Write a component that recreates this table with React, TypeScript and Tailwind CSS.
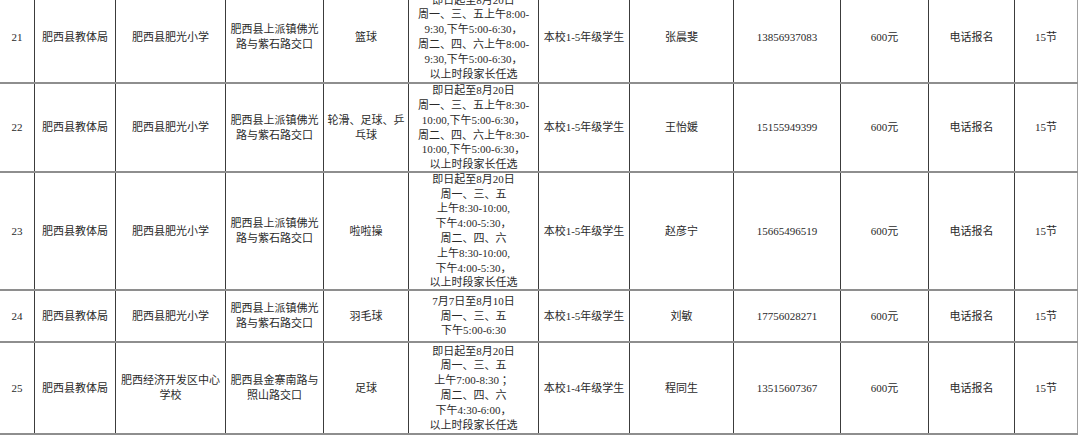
const cols = ['w-[35px]', 'w-[81px]', 'w-[110px]', 'w-[98px]', 'w-[85px]', 'w-[130px]', 'w-[91px]', 'w-[104px]', 'w-[107px]', 'w-[88px]', 'w-[86px]', 'w-[63px]'];

type Row = {
    no: string;
    org: string;
    school: string;
    addr: string;
    sport: string;
    time: string[];
    target: string;
    contact: string;
    phone: string;
    fee: string;
    signup: string;
    lessons: string;
    height: string;
};

const rows: Row[] = [
    {
        no: '21',
        org: '肥西县教体局',
        school: '肥西县肥光小学',
        addr: '肥西县上派镇佛光路与紫石路交口',
        sport: '篮球',
        time: ['即日起至8月20日', '周一、三、五上午8:00-', '9:30,下午5:00-6:30，', '周二、四、六上午8:00-', '9:30,下午5:00-6:30，', '以上时段家长任选'],
        target: '本校1-5年级学生',
        contact: '张晨斐',
        phone: '13856937083',
        fee: '600元',
        signup: '电话报名',
        lessons: '15节',
        height: 'h-[92px]',
    },
    {
        no: '22',
        org: '肥西县教体局',
        school: '肥西县肥光小学',
        addr: '肥西县上派镇佛光路与紫石路交口',
        sport: '轮滑、足球、乒乓球',
        time: ['即日起至8月20日', '周一、三、五上午8:30-', '10:00,下午5:00-6:30，', '周二、四、六上午8:30-', '10:00,下午5:00-6:30，', '以上时段家长任选'],
        target: '本校1-5年级学生',
        contact: '王怡媛',
        phone: '15155949399',
        fee: '600元',
        signup: '电话报名',
        lessons: '15节',
        height: 'h-[89px]',
    },
    {
        no: '23',
        org: '肥西县教体局',
        school: '肥西县肥光小学',
        addr: '肥西县上派镇佛光路与紫石路交口',
        sport: '啦啦操',
        time: ['即日起至8月20日', '周一、三、五', '上午8:30-10:00,', '下午4:00-5:30，', '周二、四、六', '上午8:30-10:00,', '下午4:00-5:30，', '以上时段家长任选'],
        target: '本校1-5年级学生',
        contact: '赵彦宁',
        phone: '15665496519',
        fee: '600元',
        signup: '电话报名',
        lessons: '15节',
        height: 'h-[118px]',
    },
    {
        no: '24',
        org: '肥西县教体局',
        school: '肥西县肥光小学',
        addr: '肥西县上派镇佛光路与紫石路交口',
        sport: '羽毛球',
        time: ['7月7日至8月10日', '周一、三、五', '下午5:00-6:30'],
        target: '本校1-5年级学生',
        contact: '刘敏',
        phone: '17756028271',
        fee: '600元',
        signup: '电话报名',
        lessons: '15节',
        height: 'h-[52px]',
    },
    {
        no: '25',
        org: '肥西县教体局',
        school: '肥西经济开发区中心学校',
        addr: '肥西县金寨南路与照山路交口',
        sport: '足球',
        time: ['即日起至8月20日', '周一、三、五', '上午7:00-8:30 ；', '周二、四、六', '下午4:30-6:00，', '以上时段家长任选'],
        target: '本校1-4年级学生',
        contact: '程同生',
        phone: '13515607367',
        fee: '600元',
        signup: '电话报名',
        lessons: '15节',
        height: 'h-[92px]',
    },
];

function Cell({ i, children }: { i: number; children: React.ReactNode }) {
    const last = i === cols.length - 1;
    return (
        <div
            className={`${cols[i]} flex shrink-0 items-center justify-center border-r px-[3px] text-center ${
                last ? 'border-[#a0a0a0]' : 'border-[#3c3c3c]'
            }`}
        >
            {children}
        </div>
    );
}

export default function App() {
    return (
        <div className="h-[437px] w-[1080px] overflow-hidden bg-white">
            <div
                className="-mt-[8px] text-[11px] leading-[14.8px] text-[#2a2a2a]"
                style={{ fontFamily: '"Liberation Serif", "Noto Sans CJK SC", serif' }}
            >
                {rows.map((r) => (
                    <div key={r.no} className={`flex w-[1078px] border-b-2 border-[#8e8e8e] ${r.height}`}>
                        <Cell i={0}>{r.no}</Cell>
                        <Cell i={1}>{r.org}</Cell>
                        <Cell i={2}>{r.school}</Cell>
                        <Cell i={3}>
                            <span className="px-[1px]">{r.addr}</span>
                        </Cell>
                        <Cell i={4}>{r.sport}</Cell>
                        <Cell i={5}>
                            <div className="flex flex-col items-center whitespace-nowrap">
                                {r.time.map((t, k) => (
                                    <span key={k}>{t}</span>
                                ))}
                            </div>
                        </Cell>
                        <Cell i={6}>{r.target}</Cell>
                        <Cell i={7}>{r.contact}</Cell>
                        <Cell i={8}>{r.phone}</Cell>
                        <Cell i={9}>{r.fee}</Cell>
                        <Cell i={10}>{r.signup}</Cell>
                        <Cell i={11}>{r.lessons}</Cell>
                    </div>
                ))}
            </div>
        </div>
    );
}
